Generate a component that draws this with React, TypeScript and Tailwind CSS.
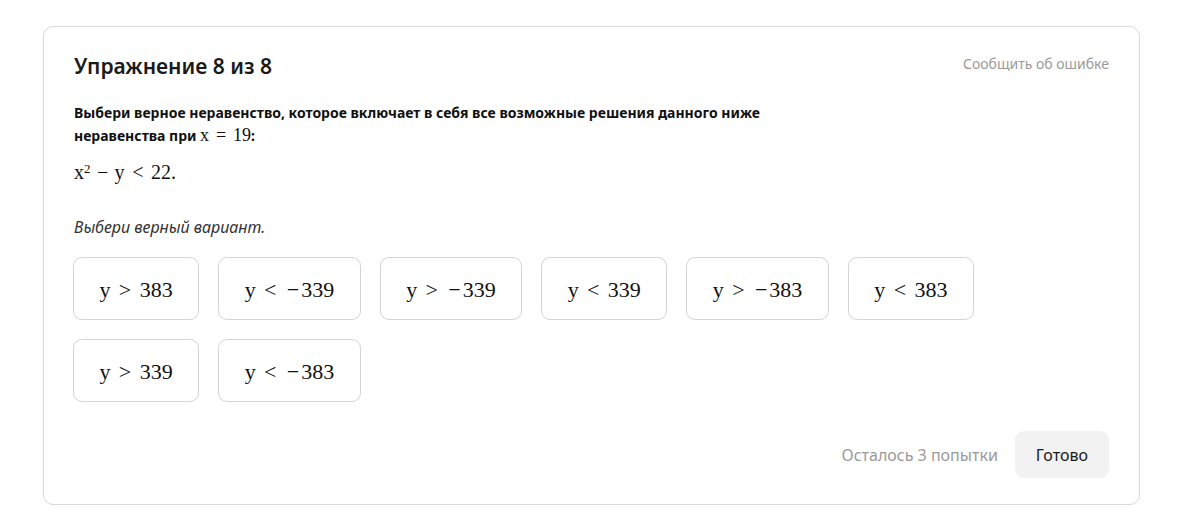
import React from "react";

function M({ children, className = "" }: { children: React.ReactNode; className?: string }) {
  return (
    <span className={`font-['Liberation_Serif',serif] font-normal whitespace-nowrap ${className}`}>{children}</span>
  );
}

function Rel({ s }: { s: string }) {
  return <span className="mx-[0.38em]">{s}</span>;
}

function Bin({ s }: { s: string }) {
  return <span className="mx-[0.32em]">{s}</span>;
}

function Num({ v }: { v: string }) {
  if (v.startsWith("−")) {
    return (
      <>
        <span className="mx-[0.09em]">−</span>
        {v.slice(1)}
      </>
    );
  }
  return <>{v}</>;
}

const options: [string, string, string][] = [
  ["y", ">", "383"],
  ["y", "<", "−339"],
  ["y", ">", "−339"],
  ["y", "<", "339"],
  ["y", ">", "−383"],
  ["y", "<", "383"],
  ["y", ">", "339"],
  ["y", "<", "−383"],
];

export default function App() {
  return (
    <div className="min-h-[529px] bg-white pt-[26px] pl-[43px] pr-[45px] font-['Noto_Sans',sans-serif] text-[#222]">
      <div className="rounded-[10px] border border-[#d9d9d9] pl-[29px] pr-[30px] pt-[23px] pb-[26px]">
        <div className="flex items-start justify-between">
          <h1 className="ml-[1px] text-[21px] leading-[30px] font-semibold text-[#1a1a1a] mt-[1px]">Упражнение 8 из 8</h1>
          <span className="text-[14px] leading-[20px] text-[#9a9a9a] mt-[4px]">Сообщить об ошибке</span>
        </div>
        <p className="ml-[1px] mt-[21px] max-w-[705px] text-[14px] leading-[22px] font-bold text-[#111]">
          Выбери верное неравенство, которое включает в себя все возможные решения данного ниже
          неравенства при <M className="text-[18px]">x<Rel s="=" />19</M>:
        </p>
        <div className="ml-[1px] mt-[11px] text-[20px] leading-[28px] text-[#111]">
          <M>
            x<sup className="text-[13px]">2</sup>
            <Bin s="−" />y<Rel s="<" />22.
          </M>
        </div>
        <p className="ml-[1px] mt-[29px] text-[16px] leading-[24px] italic text-[#333]">Выбери верный вариант.</p>
        <div className="mt-[18px] flex flex-wrap gap-[19px] max-w-[920px]">
          {options.map(([a, r, b], i) => (
            <button
              key={i}
              className="h-[63px] rounded-[9px] border border-[#d4d4d4] bg-white px-[25.5px] text-[22px] text-[#111]"
            >
              <M>
                {a}
                <Rel s={r} />
                <Num v={b} />
              </M>
            </button>
          ))}
        </div>
        <div className="mt-[29px] flex items-center justify-end gap-[17px]">
          <span className="text-[16px] text-[#9a9a9a]">Осталось 3 попытки</span>
          <button className="h-[47px] rounded-[9px] bg-[#f2f2f2] px-[21px] text-[16px] text-[#1a1a1a]">Готово</button>
        </div>
      </div>
    </div>
  );
}
